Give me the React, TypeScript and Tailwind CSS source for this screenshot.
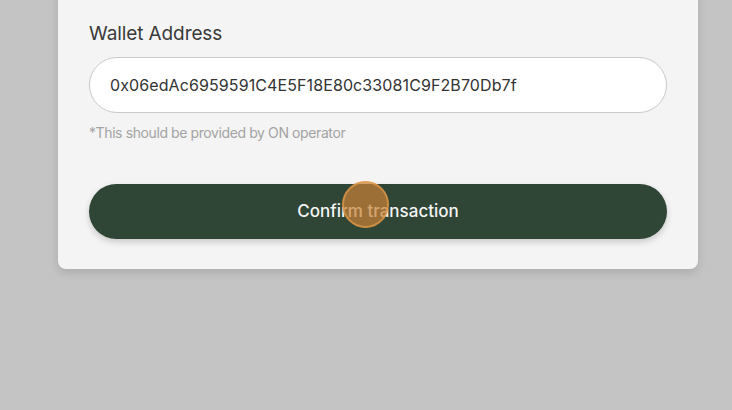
export default function App() {
  return (
    <div
      className="w-[732px] h-[410px] overflow-hidden bg-[#c4c4c4]"
      style={{ fontFamily: "Inter, 'Noto Sans', sans-serif" }}
    >
      <div className="relative -mt-5 ml-[58px] w-[640px] rounded-lg bg-[#f4f4f4] px-[31px] pt-[41px] pb-[30px] shadow-[0_4px_10px_rgba(0,0,0,0.12)]">
        <label className="block text-[19px] leading-[26px] text-[#3a3a3a] tracking-[-0.1px]">
          Wallet Address
        </label>
        <div className="mt-[10px] flex h-[56px] items-center rounded-full border border-[#c9c9c9] bg-white pl-[20px]">
          <span className="text-[16px] text-[#333] tracking-[0.1px]">
            0x06edAc6959591C4E5F18E80c33081C9F2B70Db7f
          </span>
        </div>
        <p className="mt-[10px] text-[14px] leading-5 tracking-[-0.4px] text-[#a3a3a3]">
          *This should be provided by ON operator
        </p>
        <button className="relative mt-[41px] flex h-[55px] w-full items-center justify-center rounded-full bg-[#2f4535] text-[17px] font-medium text-[#f4f4f4] shadow-[0_3px_6px_rgba(0,0,0,0.18)]">
          Confirm transaction
          <span className="absolute left-[253px] top-[-3px] h-[47px] w-[47px] rounded-full border-2 border-[#e39a4a]/70 bg-[#c98236]/70" />
        </button>
      </div>
    </div>
  );
}
